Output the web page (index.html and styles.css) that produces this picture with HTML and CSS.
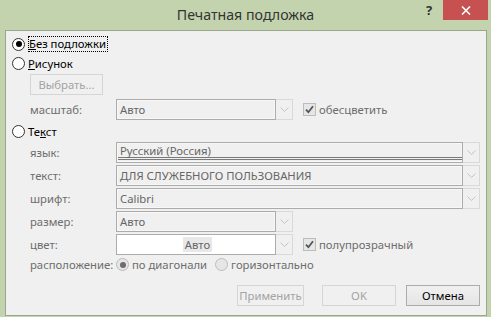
FILE: index.html
```html
<html>

<head>
  <title>Печатная подложка</title>
  <link rel="stylesheet" href="styles.css">
</head>

<body>
  <div class="window">
    <div class="titlebar">
      <div class="spacer"></div>
      <div class="title">Печатная подложка</div>
      <div class="controls">
        <div class="help">?</div>
        <div class="close">
          <svg width="10" height="9" viewBox="0 0 10 9"><path d="M1 0.5 L9 8.5 M9 0.5 L1 8.5" stroke="#fff" stroke-width="1.6"/></svg>
        </div>
      </div>
    </div>

    <div class="client">
      <div class="opt first">
        <span class="radio checked"></span>
        <span class="focus"><u>Б</u>ез подложки</span>
      </div>
      <div class="opt second">
        <span class="radio"></span>
        <span><u>Р</u>исунок</span>
      </div>
      <div class="btn disabled pick">Выбрать...</div>
      <div class="row scale">
        <span class="lbl">масштаб:</span>
        <div class="combo short">
          <div class="field">Авто</div>
          <div class="arrow"><svg width="9" height="5" viewBox="0 0 9 5"><polyline points="0.5,0.5 4.5,4.5 8.5,0.5" fill="none" stroke="#c4c4c4"/></svg></div>
        </div>
        <span class="check"><svg width="9" height="9" viewBox="0 0 9 9"><path d="M1 4.6 L3.4 7.2 L8 1.2" fill="none" stroke="#555" stroke-width="1.8"/></svg></span>
        <span class="muted">обесцветить</span>
      </div>
      <div class="opt third">
        <span class="radio"></span>
        <span>Те<u>к</u>ст</span>
      </div>

      <div class="fields">
        <div class="row">
          <span class="lbl">язык:</span>
          <div class="combo">
            <div class="field lang"><div class="lang-text">Русский (Россия)</div></div>
            <div class="arrow"><svg width="9" height="5" viewBox="0 0 9 5"><polyline points="0.5,0.5 4.5,4.5 8.5,0.5" fill="none" stroke="#c4c4c4"/></svg></div>
          </div>
        </div>
        <div class="row">
          <span class="lbl">текст:</span>
          <div class="combo">
            <div class="field">ДЛЯ СЛУЖЕБНОГО ПОЛЬЗОВАНИЯ</div>
            <div class="arrow"><svg width="9" height="5" viewBox="0 0 9 5"><polyline points="0.5,0.5 4.5,4.5 8.5,0.5" fill="none" stroke="#c4c4c4"/></svg></div>
          </div>
        </div>
        <div class="row">
          <span class="lbl">шрифт:</span>
          <div class="combo">
            <div class="field">Calibri</div>
            <div class="arrow"><svg width="9" height="5" viewBox="0 0 9 5"><polyline points="0.5,0.5 4.5,4.5 8.5,0.5" fill="none" stroke="#c4c4c4"/></svg></div>
          </div>
        </div>
        <div class="row">
          <span class="lbl">размер:</span>
          <div class="combo short">
            <div class="field">Авто</div>
            <div class="arrow"><svg width="9" height="5" viewBox="0 0 9 5"><polyline points="0.5,0.5 4.5,4.5 8.5,0.5" fill="none" stroke="#c4c4c4"/></svg></div>
          </div>
        </div>
        <div class="row">
          <span class="lbl">цвет:</span>
          <div class="combo short">
            <div class="field color"><span class="swatch">Авто</span></div>
            <div class="arrow"><svg width="9" height="5" viewBox="0 0 9 5"><polyline points="0.5,0.5 4.5,4.5 8.5,0.5" fill="none" stroke="#c4c4c4"/></svg></div>
          </div>
          <span class="check"><svg width="9" height="9" viewBox="0 0 9 9"><path d="M1 4.6 L3.4 7.2 L8 1.2" fill="none" stroke="#555" stroke-width="1.8"/></svg></span>
          <span class="muted">полупрозрачный</span>
        </div>
      </div>

      <div class="row layout">
        <span class="lbl">расположение:</span>
        <span class="radio dim checked"></span>
        <span class="muted">по диагонали</span>
        <span class="radio dim second-radio"></span>
        <span class="muted">горизонтально</span>
      </div>

      <div class="actions">
        <div class="btn disabled apply">Применить</div>
        <div class="btn disabled ok">OK</div>
        <div class="btn cancel">Отмена</div>
      </div>
    </div>
  </div>
</body>

</html>
```

FILE: styles.css
```css
body {
  margin: 0;
  background: #c3d3ae;
  font-family: 'Noto Sans', sans-serif;
  font-size: 11.3px;
  color: #000;
}

.window {
  width: 491px;
  height: 317px;
  display: flex;
  flex-direction: column;
}

.titlebar {
  height: 30px;
  display: flex;
  flex-shrink: 0;
}

.spacer {
  width: 65px;
}

.title {
  flex: 1;
  text-align: center;
  font-size: 14.2px;
  line-height: 29px;
  color: #333;
}

.controls {
  width: 65px;
  display: flex;
  align-items: flex-start;
}

.help {
  width: 17px;
  font-size: 13px;
  font-weight: bold;
  line-height: 21px;
  color: #333;
}

.close {
  width: 45px;
  height: 20px;
  background: #c75050;
  display: flex;
  align-items: center;
  justify-content: center;
}

.client {
  flex: 1;
  margin: 0 4px 1px 5px;
  border: 1px solid #9ba68e;
  background: #f0f0f0;
  padding: 4px 6px 0;
  display: flex;
  flex-direction: column;
}

.opt {
  display: flex;
  align-items: center;
  gap: 3px;
  height: 18px;
}

.opt.second {
  margin-top: 1px;
}

.opt.third {
  margin-top: 1px;
  height: 20px;
}

.radio {
  width: 13px;
  height: 13px;
  box-sizing: border-box;
  border: 1px solid #333;
  border-radius: 50%;
  background: #fff;
  display: flex;
  align-items: center;
  justify-content: center;
  flex-shrink: 0;
}

.radio.checked::after {
  content: '';
  width: 6px;
  height: 6px;
  border-radius: 50%;
  background: #000;
}

.radio.dim {
  border-color: #bcbcbc;
  background: #e6e6e6;
}

.radio.dim.checked::after {
  background: #6d6d6d;
}

.focus {
  border: 1px dotted #000;
  padding: 0 1px 0 0;
  line-height: 14px;
}

.btn {
  height: 21px;
  box-sizing: border-box;
  border: 1px solid #acacac;
  background: linear-gradient(#f0f0f0, #e5e5e5);
  display: flex;
  align-items: center;
  justify-content: center;
}

.btn.disabled {
  border-color: #d5d5d5;
  background: #f0f0f0;
  color: #a3a3a3;
}

.pick {
  margin: 2px 0 0 18px;
  width: 73px;
}

.row {
  display: flex;
  align-items: center;
  height: 21px;
  padding-left: 18px;
}

.row.scale {
  margin-top: 4px;
}

.lbl {
  width: 86px;
  color: #6d6d6d;
  flex-shrink: 0;
}

.combo {
  flex: 1;
  height: 21px;
  display: flex;
}

.combo.short {
  flex: 0 0 177px;
}

.field {
  flex: 1;
  box-sizing: border-box;
  border: 1px solid #acacac;
  background: #f0f0f0;
  box-shadow: inset 0 0 0 1px #f7f7f7;
  color: #666;
  padding-left: 3px;
  display: flex;
  align-items: center;
  white-space: nowrap;
  overflow: hidden;
}

.field.lang {
  align-items: flex-start;
  padding: 1px 0 0 1px;
}

.lang-text {
  flex: 1;
  height: 13px;
  line-height: 13px;
  padding-left: 2px;
  border-bottom: 3px double #7a7a7a;
}

.field.color {
  background: #fff;
  box-shadow: none;
  justify-content: center;
}

.swatch {
  background: #e8e8e8;
  padding: 0 2px;
  line-height: 15px;
}

.arrow {
  width: 17px;
  box-sizing: border-box;
  border: 1px solid #d9d9d9;
  border-left: 0;
  background: #f0f0f0;
  display: flex;
  align-items: center;
  justify-content: center;
}

.check {
  width: 13px;
  height: 13px;
  box-sizing: border-box;
  border: 1px solid #bcbcbc;
  background: #e6e6e6;
  margin: 0 3px 0 10px;
  display: flex;
  align-items: center;
  justify-content: center;
}

.muted {
  color: #6d6d6d;
}

.fields {
  margin-top: 1px;
  display: flex;
  flex-direction: column;
  gap: 2px;
}

.row.layout {
  height: 19px;
}

.layout .radio {
  margin-right: 3px;
}

.layout .second-radio {
  margin-left: 8px;
}

.actions {
  margin-top: 11px;
  display: flex;
  justify-content: flex-end;
}

.apply {
  width: 67px;
  margin-right: 18px;
}

.ok {
  width: 74px;
  margin-right: 10px;
}

.cancel {
  width: 74px;
}
```
